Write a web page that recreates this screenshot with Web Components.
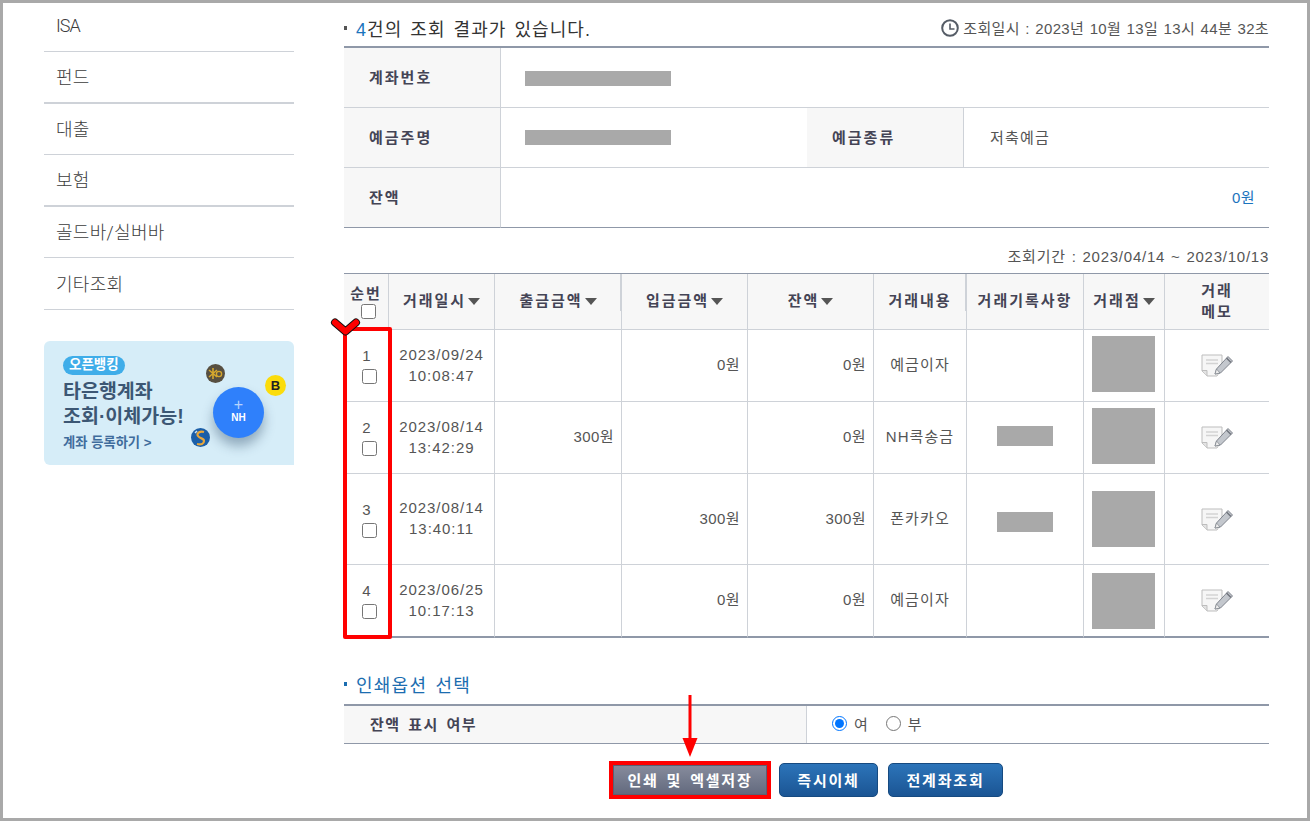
<!DOCTYPE html>
<html lang="ko">
<head>
<meta charset="utf-8">
<title>거래내역조회</title>
<style>
html, body { margin: 0; height: 100%; background: #fff; overflow: hidden; }
body { font-family: "Liberation Sans", "Noto Sans CJK KR", sans-serif; color: #444; }
</style>
</head>
<body>
<bank-page>
    <side-menu slot="side"></side-menu>
    <promo-banner slot="side"></promo-banner>

    <result-heading slot="main" stamp="조회일시 : 2023년 10월 13일 13시 44분 32초"><b>4</b>건의 조회 결과가 있습니다.</result-heading>
    <account-summary slot="main"></account-summary>
    <period-note slot="main">조회기간 : 2023/04/14 ~ 2023/10/13</period-note>
    <tx-table slot="main"></tx-table>
    <print-options slot="main"></print-options>
    <action-bar slot="main">
        <bank-button tone="gray" marked style="width:154px;margin-right:2px">인쇄 및 엑셀저장</bank-button>
        <bank-button style="width:99px">즉시이체</bank-button>
        <bank-button style="width:115px">전계좌조회</bank-button>
    </action-bar>
</bank-page>

<script>
const FONT = '"Liberation Sans", "Noto Sans CJK KR", sans-serif';

class BankPage extends HTMLElement {
    constructor() {
        super();
        this.attachShadow({ mode: 'open' });
        this.shadowRoot.innerHTML = `
            <style>
                :host {
                    display: grid;
                    grid-template-columns: 250px 925px;
                    column-gap: 50px;
                    box-sizing: border-box;
                    width: 1310px;
                    height: 821px;
                    padding-left: 41px;
                    border: 3px solid #a9a9a9;
                    overflow: hidden;
                    font-family: ${FONT};
                }
                .col { display: flex; flex-direction: column; min-width: 0; }
            </style>
            <div class="col"><slot name="side"></slot></div>
            <div class="col"><slot name="main"></slot></div>
        `;
    }
}

class SideMenu extends HTMLElement {
    constructor() {
        super();
        this.attachShadow({ mode: 'open' });
        // row heights alternate in the original, every other rule is 2px
        const items = [['ISA', 49, 1], ['펀드', 52, 2], ['대출', 51, 1], ['보험', 52, 2], ['골드바/실버바', 51, 1], ['기타조회', 52, 1]];
        this.shadowRoot.innerHTML = `
            <style>
                :host { display: block; }
                a {
                    display: flex;
                    align-items: center;
                    box-sizing: border-box;
                    padding: 0 0 2px 12px;
                    font-family: Roboto, "Noto Sans CJK KR", sans-serif;
                    font-size: 18px;
                    font-weight: 300;
                    letter-spacing: .3px;
                    color: #3c3c3c;
                    border-bottom: 1px solid #ced2d8;
                }
                a.latin { letter-spacing: -1px; padding-bottom: 4px; }
            </style>
            ${items.map(([t, h, b]) => `<a class="${t === 'ISA' ? 'latin' : ''}" style="height:${h}px;border-bottom-width:${b}px">${t}</a>`).join('')}
        `;
    }
}

class PromoBanner extends HTMLElement {
    constructor() {
        super();
        this.attachShadow({ mode: 'open' });
        this.shadowRoot.innerHTML = `
            <style>
                :host {
                    display: block;
                    position: relative;
                    box-sizing: border-box;
                    height: 124px;
                    margin-top: 31px;
                    padding: 14px 0 0 19px;
                    background: #d6edf8;
                    border-radius: 6px 6px 0 6px;
                    overflow: hidden;
                }
                .pill {
                    display: inline-block;
                    height: 19px;
                    line-height: 18px;
                    padding: 0 6px;
                    border-radius: 10px;
                    background: #3fade9;
                    color: #fff;
                    font-size: 13.500px;
                    font-weight: 700;
                }
                .big { margin-top: 4px; font-size: 19.500px; line-height: 25px; font-weight: 700; color: #3c5774; }
                .link { margin-top: 5px; font-size: 13.300px; line-height: 18px; font-weight: 700; color: #3f6c9c; }
                .coin { position: absolute; border-radius: 50%; }
                svg { position: absolute; display: block; }
                .nh {
                    left: 169px; top: 46px; width: 51px; height: 51px;
                    background: #2f80fb;
                    box-shadow: 0 8px 12px rgba(40, 70, 100, .4);
                    color: #fff;
                    text-align: center;
                }
                .nh i { display: block; font-style: normal; font-size: 16px; line-height: 14px; margin-top: 11px; opacity: .65; font-weight: 300; }
                .nh b { display: block; font-size: 10px; line-height: 12px; margin-top: 0; }
                .kakao {
                    left: 221px; top: 34px; width: 21px; height: 21px;
                    background: #fbdc0c; color: #222;
                    font-size: 13px; font-weight: 700; line-height: 21px; text-align: center;
                }
            </style>
            <span class="pill">오픈뱅킹</span>
            <div class="big">타은행계좌<br>조회·이체가능!</div>
            <div class="link">계좌 등록하기 &gt;</div>
            <svg style="left:162px;top:23px" width="19" height="19" viewBox="0 0 19 19">
                <circle cx="9.5" cy="9.5" r="9.5" fill="#574f41"/>
                <path d="M7 4v11M3 6l8 7M3 13l8-7" stroke="#d5a72d" stroke-width="1.6"/>
                <circle cx="13" cy="10" r="2.6" fill="none" stroke="#d5a72d" stroke-width="1.4"/>
            </svg>
            <svg style="left:147px;top:87px" width="19" height="19" viewBox="0 0 19 19">
                <circle cx="9.5" cy="9.5" r="9.5" fill="#1c5fa8"/>
                <path d="M13 4C9 3 5 5 7 8s6 2 6 5-3 4-7 3" fill="none" stroke="#e9a63a" stroke-width="2.2"/>
                <path d="M4 5l2-2" stroke="#cfe4f5" stroke-width="1.5"/>
            </svg>
            <div class="coin nh"><i>+</i><b>NH</b></div>
            <div class="coin kakao">B</div>
        `;
    }
}

class ResultHeading extends HTMLElement {
    constructor() {
        super();
        this.attachShadow({ mode: 'open' });
        this.shadowRoot.innerHTML = `
            <style>
                :host {
                    display: flex;
                    align-items: center;
                    height: 43px;
                    padding-top: 6px;
                    box-sizing: border-box;
                }
                .dot { width: 3px; height: 4px; background: #555; margin-right: 9px; }
                .title { font-size: 18px; letter-spacing: 1.05px; word-spacing: 2px; color: #333; }
                ::slotted(b) { font-weight: 400; color: #1b74bd; }
                .stamp {
                    display: flex;
                    align-items: center;
                    gap: 4px;
                    margin-left: auto;
                    font-size: 15px;
                    letter-spacing: .33px;
                    word-spacing: 1px;
                    color: #555;
                }
                svg { display: block; }
            </style>
            <span class="dot"></span>
            <span class="title"><slot></slot></span>
            <span class="stamp">
                <svg width="18" height="18" viewBox="0 0 18 18">
                    <circle cx="9" cy="9" r="7.8" fill="#fff" stroke="#555c66" stroke-width="2"/>
                    <path d="M9 4.5V10h4.5" fill="none" stroke="#555c66" stroke-width="1.6"/>
                </svg>
                <span>${this.getAttribute('stamp')}</span>
            </span>
        `;
    }
}

class AccountSummary extends HTMLElement {
    constructor() {
        super();
        this.attachShadow({ mode: 'open' });
        this.shadowRoot.innerHTML = `
            <style>
                :host {
                    display: grid;
                    grid-template-columns: 157px 306px 157px 1fr;
                    grid-auto-rows: 60px;
                    border-top: 2px solid #8f98a8;
                    font-size: 15px;
                    color: #555;
                }
                .th, .td {
                    display: flex;
                    align-items: center;
                    box-sizing: border-box;
                    padding-bottom: 3px;
                    border-bottom: 1px solid #ced2d8;
                }
                .th {
                    padding-left: 25px;
                    background: #f7f7f7;
                    border-right: 1px solid #ced2d8;
                    font-weight: 700;
                    letter-spacing: 2px;
                    color: #444455;
                }
                .td { padding-left: 26px; letter-spacing: 1.2px; }
                .wide { grid-column: span 3; }
                .last { border-bottom-color: #8f98a8; }
                .mask { width: 146px; height: 15px; margin-left: -2px; background: #a9a9a9; }
                .money { justify-content: flex-end; padding-right: 14px; color: #1b74bd; letter-spacing: .4px; }
            </style>
            <div class="th">계좌번호</div>
            <div class="td wide"><span class="mask" style="margin-top:5px"></span></div>
            <div class="th">예금주명</div>
            <div class="td"><span class="mask" style="margin-top:3px"></span></div>
            <div class="th">예금종류</div>
            <div class="td">저축예금</div>
            <div class="th last">잔액</div>
            <div class="td wide last money">0원</div>
        `;
    }
}

class PeriodNote extends HTMLElement {
    constructor() {
        super();
        this.attachShadow({ mode: 'open' });
        this.shadowRoot.innerHTML = `
            <style>
                :host {
                    display: flex;
                    justify-content: flex-end;
                    align-items: flex-end;
                    box-sizing: border-box;
                    height: 45px;
                    padding-bottom: 7px;
                    font-size: 15px;
                    letter-spacing: .75px;
                    word-spacing: 1px;
                    color: #555;
                }
            </style>
            <slot></slot>
        `;
    }
}

class MemoIcon extends HTMLElement {
    constructor() {
        super();
        this.attachShadow({ mode: 'open' });
        this.shadowRoot.innerHTML = `
            <style>:host { display: block; width: 33px; margin-left: 36px; line-height: 0; } svg { display: block; }</style>
            <svg width="33" height="23" viewBox="0 0 33 23">
                <path d="M1 1h20v13l-5 8H6l-5-5z" fill="#f6f6f6" stroke="#bdbdbd"/>
                <path d="M1 16.500h5v5.500" fill="#e3e3e3" stroke="#bdbdbd"/>
                <path d="M5 6h12M5 9.500h12" stroke="#d3d3d3" stroke-width="1.600"/>
                <path d="M14 20l1.500-5L27 2.500l4.500 4.500-12 12z" fill="#c3c7cd" stroke="#7f848c"/>
                <path d="M25.500 4l4.500 4.500" stroke="#70757d" stroke-width="1.500"/>
                <path d="M14 20l1.500-5 3.500 4z" fill="#ececec" stroke="#80858d" stroke-width=".7"/>
            </svg>
        `;
    }
}

class TxTable extends HTMLElement {
    constructor() {
        super();
        this.attachShadow({ mode: 'open' });
        // rec / blk: nudges that put the masked boxes where they sit in each row
        const rows = [
            { h: 72, no: 1, d: '2023/09/24', t: '10:08:47', out: '', inn: '0원', bal: '0원', memo: '예금이자', rec: false, blk: 'padding-bottom:3px' },
            { h: 72, no: 2, d: '2023/08/14', t: '13:42:29', out: '300원', inn: '', bal: '0원', memo: 'NH콕송금', rec: 'padding-bottom:4px', blk: 'padding-bottom:3px' },
            { h: 91, no: 3, d: '2023/08/14', t: '13:40:11', out: '', inn: '300원', bal: '300원', memo: '폰카카오', rec: 'padding-top:5px', blk: '' },
            { h: 73, no: 4, d: '2023/06/25', t: '10:17:13', out: '', inn: '0원', bal: '0원', memo: '예금이자', rec: false, blk: 'padding-top:1px' }
        ];
        const body = rows.map(r => `
            <tr style="height:${r.h}px">
                <td class="c no up">${r.no}<br><input type="checkbox"></td>
                <td class="c up date">${r.d}<br>${r.t}</td>
                <td class="r up">${r.out}</td>
                <td class="r up">${r.inn}</td>
                <td class="r up">${r.bal}</td>
                <td class="c k up">${r.memo}</td>
                <td class="c" style="${r.rec || ''}">${r.rec ? '<span class="mask" style="width:56px;height:20px;margin-left:30px"></span>' : ''}</td>
                <td class="c" style="${r.blk}"><span class="mask" style="width:63px;height:56px;margin-left:8px"></span></td>
                <td class="c"><memo-icon></memo-icon></td>
            </tr>`).join('');
        const sort = '<i class="tri"></i>';
        this.shadowRoot.innerHTML = `
            <style>
                :host { display: block; position: relative; }
                table {
                    width: 925px;
                    table-layout: fixed;
                    border-collapse: separate;
                    border-spacing: 0;
                    border-top: 1px solid #8f98a8;
                    font-size: 15px;
                    color: #555;
                }
                th, td {
                    box-sizing: border-box;
                    padding: 0;
                    border-right: 1px solid #ced2d8;
                    border-bottom: 1px solid #ced2d8;
                }
                th:last-child, td:last-child { border-right: 0; }
                tbody tr:last-child td { border-bottom: 2px solid #8f98a8; }
                thead tr { height: 56px; }
                th {
                    position: relative;
                    padding-bottom: 2px;
                    background: #f7f7f7;
                    font-weight: 700;
                    letter-spacing: 2px;
                    line-height: 21px;
                    color: #444455;
                    white-space: nowrap;
                }
                th.grip::after {
                    content: "";
                    position: absolute;
                    right: -1px;
                    top: 0;
                    width: 2px;
                    height: 37px;
                    background: #ced2d8;
                }
                td { line-height: 21px; }
                td.up { padding-bottom: 2px; }
                td.c { text-align: center; }
                td.r { text-align: right; padding-right: 7px; letter-spacing: .4px; }
                td.k { letter-spacing: 1.1px; }
                td.date { letter-spacing: .95px; }
                .tri {
                    display: inline-block;
                    width: 0;
                    height: 0;
                    margin-left: 2px;
                    border: solid transparent;
                    border-width: 7px 6px 0;
                    border-top-color: #555;
                    vertical-align: 1px;
                }
                .mask { display: block; background: #a9a9a9; }
                input { display: block; width: 15px; height: 15px; margin: 3px 0 0 17px; }
                .no { letter-spacing: 0; padding-left: 1px; }
                th input { margin-top: 0; }
                .box {
                    position: absolute;
                    left: -1px;
                    top: 54px;
                    box-sizing: border-box;
                    width: 49px;
                    height: 312px;
                    border: 4px solid #f00;
                    border-radius: 2px;
                }
                .check { position: absolute; left: -14px; top: 45px; display: block; }
            </style>
            <table>
                <colgroup>
                    <col style="width:45px"><col style="width:106px"><col style="width:127px">
                    <col style="width:126px"><col style="width:126px"><col style="width:93px">
                    <col style="width:117px"><col style="width:81px"><col style="width:104px">
                </colgroup>
                <thead>
                    <tr>
                        <th>순번<input type="checkbox"></th>
                        <th>거래일시${sort}</th>
                        <th class="grip">출금금액${sort}</th>
                        <th>입금금액${sort}</th>
                        <th>잔액${sort}</th>
                        <th class="grip">거래내용</th>
                        <th>거래기록사항</th>
                        <th>거래점${sort}</th>
                        <th>거래<br>메모</th>
                    </tr>
                </thead>
                <tbody>${body}</tbody>
            </table>
            <div class="box"></div>
            <svg class="check" width="32" height="20" viewBox="0 0 32 20">
                <path d="M5 4.500l10.500 9 10.500-9" fill="none" stroke="#111" stroke-width="8" stroke-linecap="round" stroke-linejoin="round"/>
                <path d="M5 4.500l10.500 9 10.500-9" fill="none" stroke="#f00" stroke-width="6" stroke-linecap="round" stroke-linejoin="round"/>
            </svg>
        `;
    }
}

class PrintOptions extends HTMLElement {
    constructor() {
        super();
        this.attachShadow({ mode: 'open' });
        this.shadowRoot.innerHTML = `
            <style>
                :host { display: block; }
                h3 {
                    display: flex;
                    align-items: center;
                    box-sizing: border-box;
                    height: 66px;
                    margin: 0;
                    padding-top: 26px;
                    font-size: 18px;
                    font-weight: 400;
                    letter-spacing: 1.25px;
                    word-spacing: 2px;
                    color: #1b6db0;
                }
                h3 i { width: 3px; height: 4px; background: #1b6db0; margin-right: 9px; }
                .row {
                    display: grid;
                    grid-template-columns: 463px 1fr;
                    height: 40px;
                    box-sizing: border-box;
                    border-top: 2px solid #8f98a8;
                    border-bottom: 1px solid #8f98a8;
                    font-size: 15px;
                }
                .th {
                    display: flex;
                    align-items: center;
                    padding: 0 0 2px 26px;
                    background: #f7f7f7;
                    border-right: 1px solid #ced2d8;
                    font-weight: 700;
                    letter-spacing: 1.5px;
                    word-spacing: 2px;
                    color: #444455;
                }
                .td { display: flex; align-items: center; padding: 0 0 2px 25px; color: #555; }
                label { display: inline-flex; align-items: center; gap: 7px; margin-right: 18px; }
                input { width: 15px; height: 15px; margin: 0; }
            </style>
            <h3><i></i>인쇄옵션 선택</h3>
            <div class="row">
                <div class="th">잔액 표시 여부</div>
                <div class="td">
                    <label><input type="radio" name="bal" checked>여</label>
                    <label><input type="radio" name="bal">부</label>
                </div>
            </div>
        `;
    }
}

class ActionBar extends HTMLElement {
    constructor() {
        super();
        this.attachShadow({ mode: 'open' });
        this.shadowRoot.innerHTML = `
            <style>
                :host {
                    display: flex;
                    position: relative;
                    align-items: center;
                    gap: 10px;
                    margin-top: 19px;
                    padding-left: 269px;
                }
                svg { position: absolute; left: 338px; top: -68px; display: block; }
            </style>
            <slot></slot>
            <svg width="16" height="62" viewBox="0 0 16 62">
                <path d="M8 0v44" stroke="#f00" stroke-width="3"/>
                <path d="M0.500 43h15L8 62z" fill="#f00"/>
            </svg>
        `;
    }
}

class BankButton extends HTMLElement {
    constructor() {
        super();
        this.attachShadow({ mode: 'open' });
        const gray = this.getAttribute('tone') === 'gray';
        const marked = this.hasAttribute('marked');
        this.shadowRoot.innerHTML = `
            <style>
                :host { display: block; }
                button {
                    display: block;
                    box-sizing: border-box;
                    width: 100%;
                    height: ${marked ? 30 : 34}px;
                    padding: 0 0 1px;
                    border: 1px solid ${gray ? '#5a6072' : '#164a80'};
                    border-radius: ${marked ? 0 : 5}px;
                    background: ${gray ? 'linear-gradient(#868b9c, #636a7e)' : 'linear-gradient(#2c74b9, #1b5594)'};
                    color: #fff;
                    font: 700 15px ${FONT};
                    letter-spacing: 1.8px;
                    word-spacing: 2px;
                    ${marked ? 'outline: 4px solid #f00;' : ''}
                }
            </style>
            <button type="button"><slot></slot></button>
        `;
    }
}

customElements.define('bank-page', BankPage);
customElements.define('side-menu', SideMenu);
customElements.define('promo-banner', PromoBanner);
customElements.define('result-heading', ResultHeading);
customElements.define('account-summary', AccountSummary);
customElements.define('period-note', PeriodNote);
customElements.define('memo-icon', MemoIcon);
customElements.define('tx-table', TxTable);
customElements.define('print-options', PrintOptions);
customElements.define('action-bar', ActionBar);
customElements.define('bank-button', BankButton);
</script>
</body>
</html>
